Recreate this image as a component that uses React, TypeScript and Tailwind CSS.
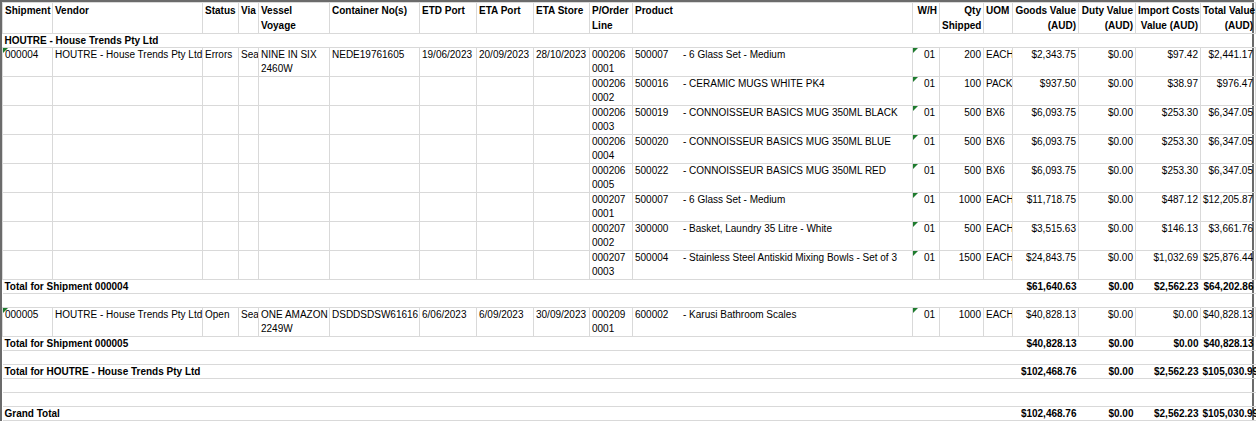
import React from 'react'

const COLS = [50, 150, 36, 20, 71, 90, 57, 57, 56, 43, 280, 27, 44, 29, 66, 57, 65, 55]

type Line = { po: string; code: string; desc: string; qty: string; uom: string; goods: string; imp: string; total: string }

const LINES4: Line[] = [
  { po: '000206 0001', code: '500007', desc: '- 6 Glass Set - Medium', qty: '200', uom: 'EACH', goods: '$2,343.75', imp: '$97.42', total: '$2,441.17' },
  { po: '000206 0002', code: '500016', desc: '- CERAMIC MUGS WHITE PK4', qty: '100', uom: 'PACK', goods: '$937.50', imp: '$38.97', total: '$976.47' },
  { po: '000206 0003', code: '500019', desc: '- CONNOISSEUR BASICS MUG 350ML BLACK', qty: '500', uom: 'BX6', goods: '$6,093.75', imp: '$253.30', total: '$6,347.05' },
  { po: '000206 0004', code: '500020', desc: '- CONNOISSEUR BASICS MUG 350ML BLUE', qty: '500', uom: 'BX6', goods: '$6,093.75', imp: '$253.30', total: '$6,347.05' },
  { po: '000206 0005', code: '500022', desc: '- CONNOISSEUR BASICS MUG 350ML RED', qty: '500', uom: 'BX6', goods: '$6,093.75', imp: '$253.30', total: '$6,347.05' },
  { po: '000207 0001', code: '500007', desc: '- 6 Glass Set - Medium', qty: '1000', uom: 'EACH', goods: '$11,718.75', imp: '$487.12', total: '$12,205.87' },
  { po: '000207 0002', code: '300000', desc: '- Basket, Laundry 35 Litre - White', qty: '500', uom: 'EACH', goods: '$3,515.63', imp: '$146.13', total: '$3,661.76' },
  { po: '000207 0003', code: '500004', desc: '- Stainless Steel Antiskid Mixing Bowls - Set of 3', qty: '1500', uom: 'EACH', goods: '$24,843.75', imp: '$1,032.69', total: '$25,876.44' },
]

const td = 'border border-[#d9d9d9] px-[2px] py-0 align-top leading-[14px] overflow-hidden whitespace-nowrap'
const Tri = () => (
  <span className="absolute left-0 top-0 w-0 h-0 border-t-[5px] border-r-[5px] border-t-[#1e7b2e] border-r-transparent" />
)

function Two({ a, b }: { a: string; b: string }) {
  return <>{a}<br />{b}</>
}

function ShipCells({ ship, status, v1, v2, container, etd, eta, store, first }: { ship: string; status: string; v1: string; v2: string; container: string; etd: string; eta: string; store: string; first: boolean }) {
  if (!first) return <>{Array.from({ length: 9 }).map((_, i) => <td key={i} className={td} />)}</>
  return (
    <>
      <td className={td + ' relative'}><Tri />{ship}</td>
      <td className={td}>HOUTRE - House Trends Pty Ltd</td>
      <td className={td}>{status}</td>
      <td className={td}>Sea</td>
      <td className={td}><Two a={v1} b={v2} /></td>
      <td className={td}>{container}</td>
      <td className={td}>{etd}</td>
      <td className={td}>{eta}</td>
      <td className={td}>{store}</td>
    </>
  )
}

function LineCells({ l }: { l: Line }) {
  const [a, b] = l.po.split(' ')
  return (
    <>
      <td className={td}><Two a={a} b={b} /></td>
      <td className={td}><span className="inline-block w-[48px]">{l.code}</span>{l.desc}</td>
      <td className={td + ' relative text-right pr-[4px]'}><Tri />01</td>
      <td className={td + ' text-right'}>{l.qty}</td>
      <td className={td}>{l.uom}</td>
      <td className={td + ' text-right'}>{l.goods}</td>
      <td className={td + ' text-right'}>$0.00</td>
      <td className={td + ' text-right'}>{l.imp}</td>
      <td className={td + ' text-right'}>{l.total}</td>
    </>
  )
}

const cell = 'border-y border-[#d9d9d9] px-[2px] py-0 leading-[13px] whitespace-nowrap'

function TotalRow({ label, goods, imp, total }: { label: string; goods: string; imp: string; total: string }) {
  return (
    <tr className="h-[14px] font-bold">
      <td colSpan={14} className={cell}>{label}</td>
      <td className={cell + ' text-right'}>{goods}</td>
      <td className={cell + ' text-right'}>$0.00</td>
      <td className={cell + ' text-right'}>{imp}</td>
      <td className={cell + ' text-right'}>{total}</td>
    </tr>
  )
}

const Blank = () => (
  <tr className="h-[14px]"><td colSpan={18} className={cell} /></tr>
)

export default function App() {
  const hdr = 'border border-[#d9d9d9] px-[2px] py-0 align-top leading-[15px] font-bold whitespace-nowrap'
  return (
    <div className="w-[1256px] h-[436px] bg-white overflow-hidden text-black" style={{ fontFamily: '"Liberation Sans", Arial, sans-serif' }}>
      <div className="w-[1254px] border-l-2 border-t-2 border-r-2 border-[#6b6b6b] text-[10px]">
        <table className="table-fixed border-collapse w-full">
          <colgroup>
            {COLS.map((w, i) => <col key={i} style={{ width: w }} />)}
          </colgroup>
          <tbody>
            <tr className="h-[30px]">
              <td className={hdr}>Shipment</td>
              <td className={hdr}>Vendor</td>
              <td className={hdr}>Status</td>
              <td className={hdr}>Via</td>
              <td className={hdr}><Two a="Vessel" b="Voyage" /></td>
              <td className={hdr}>Container No(s)</td>
              <td className={hdr}>ETD Port</td>
              <td className={hdr}>ETA Port</td>
              <td className={hdr}>ETA Store</td>
              <td className={hdr}><Two a="P/Order" b="Line" /></td>
              <td className={hdr}>Product</td>
              <td className={hdr + ' text-right'}>W/H</td>
              <td className={hdr + ' text-right'}><Two a="Qty" b="Shipped" /></td>
              <td className={hdr}>UOM</td>
              <td className={hdr + ' text-right'}><Two a="Goods Value" b="(AUD)" /></td>
              <td className={hdr + ' text-right'}><Two a="Duty Value" b="(AUD)" /></td>
              <td className={hdr + ' text-right'}><Two a="Import Costs" b="Value (AUD)" /></td>
              <td className={hdr + ' text-right'}><Two a="Total Value" b="(AUD)" /></td>
            </tr>
            <tr className="h-[14px] font-bold">
              <td colSpan={18} className={cell}>HOUTRE - House Trends Pty Ltd</td>
            </tr>
            {LINES4.map((l, i) => (
              <tr key={i} className="h-[29px]">
                <ShipCells first={i === 0} ship="000004" status="Errors" v1="NINE IN SIX" v2="2460W" container="NEDE19761605" etd="19/06/2023" eta="20/09/2023" store="28/10/2023" />
                <LineCells l={l} />
              </tr>
            ))}
            <TotalRow label="Total for Shipment 000004" goods="$61,640.63" imp="$2,562.23" total="$64,202.86" />
            <Blank />
            <tr className="h-[29px]">
              <ShipCells first ship="000005" status="Open" v1="ONE AMAZON" v2="2249W" container="DSDDSDSW616161" etd="6/06/2023" eta="6/09/2023" store="30/09/2023" />
              <LineCells l={{ po: '000209 0001', code: '600002', desc: '- Karusi Bathroom Scales', qty: '1000', uom: 'EACH', goods: '$40,828.13', imp: '$0.00', total: '$40,828.13' }} />
            </tr>
            <TotalRow label="Total for Shipment 000005" goods="$40,828.13" imp="$0.00" total="$40,828.13" />
            <Blank />
            <TotalRow label="Total for HOUTRE - House Trends Pty Ltd" goods="$102,468.76" imp="$2,562.23" total="$105,030.99" />
            <Blank />
            <Blank />
            <TotalRow label="Grand Total" goods="$102,468.76" imp="$2,562.23" total="$105,030.99" />
          </tbody>
        </table>
      </div>
    </div>
  )
}
